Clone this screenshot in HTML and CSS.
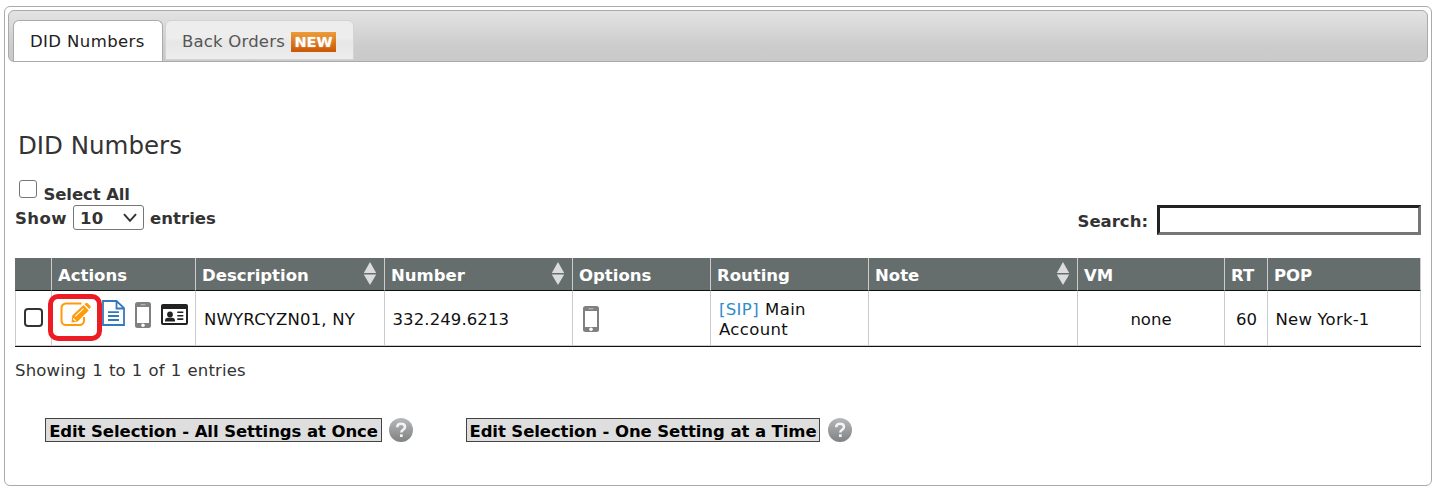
FILE: index.html
```html
<!DOCTYPE html>
<html lang="en">
<head>
<meta charset="utf-8">
<title>DID Numbers</title>
<link rel="stylesheet" href="styles.css">
</head>
<body>
<svg class="defs" width="0" height="0" aria-hidden="true">
  <defs>
    <linearGradient id="help-fill" x1="0" y1="0" x2="0" y2="1"><stop offset="0" stop-color="#b7b8ba"/><stop offset="1" stop-color="#7f8183"/></linearGradient>
    <symbol id="phone" viewBox="0 0 16 26"><rect width="16" height="26" rx="2.5" fill="#808080"/><rect x="2" y="5" width="12" height="16" fill="#fff"/><rect x="5.5" y="2.3" width="5" height="1" rx=".5" fill="#c4c4c4"/><circle cx="8" cy="23.3" r="1.8" fill="#fff"/></symbol>
    <symbol id="sort" viewBox="0 0 14 24"><path d="M7 0 13.2 11H.8Z" fill="#dcdcdc"/><path d="M7 23 13.2 12.4H.8Z" fill="#dcdcdc"/></symbol>
    <symbol id="help" viewBox="0 0 24 24"><circle cx="12" cy="12" r="12" fill="url(#help-fill)"/><path d="M8.2 9.3C8.2 6.800 9.700 5.800 12 5.800s4 1.200 4 3.200c0 2.700-3.700 2.700-3.700 5.500" fill="none" stroke="#f4f4f4" stroke-width="2.500"/><rect x="11" y="16.300" width="2.700" height="2.700" fill="#f4f4f4"/></symbol>
  </defs>
</svg>
<main class="panel">
  <nav class="tabs">
    <a class="tab tab-active"><span class="tab-text">DID Numbers</span></a>
    <a class="tab"><span class="tab-text-muted">Back Orders</span><span class="badge">NEW</span></a>
  </nav>
  <section class="content">
    <h1 class="title">DID Numbers</h1>
    <label class="select-all"><input class="check" type="checkbox"><span class="select-label">Select All</span></label>
    <div class="toolbar">
      <label class="length"><span class="show">Show</span>
        <span class="picker"><span>10</span><svg width="14" height="10" viewBox="0 0 14 10"><path d="M1 1.200 7 7.800l6-6.600" fill="none" stroke="#333" stroke-width="2"/></svg></span>
        <span class="entries">entries</span></label>
      <label class="search"><span class="search-label">Search:</span><input class="search-input" type="text"></label>
    </div>
    <table class="grid">
      <colgroup><col class="c-check"><col class="c-actions"><col class="c-desc"><col class="c-number"><col class="c-options"><col class="c-routing"><col class="c-note"><col class="c-vm"><col class="c-rt"><col class="c-pop"></colgroup>
      <thead><tr>
        <th></th>
        <th><div class="head">Actions</div></th>
        <th><div class="head"><span>Description</span><svg class="sort"><use href="#sort"/></svg></div></th>
        <th><div class="head"><span>Number</span><svg class="sort"><use href="#sort"/></svg></div></th>
        <th><div class="head">Options</div></th>
        <th><div class="head">Routing</div></th>
        <th><div class="head">Note<svg class="sort"><use href="#sort"/></svg></div></th>
        <th><div class="head">VM</div></th>
        <th><div class="head">RT</div></th>
        <th><div class="head">POP</div></th>
      </tr></thead>
      <tbody><tr>
        <td class="pick"><input class="check check-row" type="checkbox"></td>
        <td class="actions"><div class="icons">
          <svg class="i-edit" width="32" height="25" viewBox="0 0 32 25"><path d="M21.500 1.500H6a4.500 4.500 0 0 0-4.500 4.500v12.500A4.500 4.500 0 0 0 6 23h13.500a4.500 4.500 0 0 0 4.500-4.500V15" fill="none" stroke="#ff9a0a" stroke-width="2"/><path d="m11.500 20.500.8-7L23.500 3l5.200 5.400L17.600 19.500Zm13-18.300 1-.9q1.200-1 2.400.1l2.300 2.300q1.200 1.200.1 2.400l-1 1Z" fill="#ff9a0a"/><path d="m15.200 14.300 8.300-7.700M13.200 16.500l2.400 2.300" stroke="#fff" stroke-width="1.100"/></svg>
          <svg class="i-doc" width="23" height="26" viewBox="0 0 23 26"><path d="M1 1h13.500L22 8.200V25H1ZM14.500 1v7.500H22M6 12.200h11M6 16h11M6 20h11" fill="none" stroke="#3379bd" stroke-width="1.800"/></svg>
          <svg class="i-phone" width="16" height="26"><use href="#phone"/></svg>
          <svg class="i-card" width="27" height="21" viewBox="0 0 27 21"><rect width="27" height="21" rx="2" fill="#222"/><path d="M2 5h23v14H2Z" fill="#fff"/><circle cx="9" cy="10.500" r="2.900" fill="#222"/><path d="M4 17.500v-.7q0-3 3-3h4q3 0 3 3v.7ZM16.300 7.500h6v1.600h-6Zm0 3.400h6v1.600h-6Zm0 3.400h6v1.600h-6Z" fill="#222"/></svg>
          <span class="highlight"></span>
        </div></td>
        <td><span class="t-desc">NWYRCYZN01, NY</span></td>
        <td><span class="t-number">332.249.6213</span></td>
        <td class="opt"><svg class="opt-phone" width="16" height="26"><use href="#phone"/></svg></td>
        <td class="routing"><a class="sip">[SIP]</a> Main<br>Account</td>
        <td></td>
        <td class="center">none</td>
        <td class="rt">60</td>
        <td><span class="t-pop">New York-1</span></td>
      </tr></tbody>
    </table>
    <p class="info">Showing 1 to 1 of 1 entries</p>
    <div class="buttons">
      <button class="edit edit-all">Edit Selection - All Settings at Once</button><svg class="help"><use href="#help"/></svg>
      <button class="edit edit-one">Edit Selection - One Setting at a Time</button><svg class="help"><use href="#help"/></svg>
    </div>
  </section>
</main>
</body>
</html>
```
FILE: styles.css
```css
* { box-sizing: border-box; }
body { margin: 0; padding: 6px 3px 0 4px; background: #fff; color: #333; font: 16.5px/20px Verdana, "DejaVu Sans", sans-serif; }
.defs { position: absolute; }
.panel { height: 480px; border: 1px solid #aaa; border-radius: 6px; padding: 3px; }
.tabs { display: flex; align-items: flex-start; gap: 2px; height: 52px; padding: 9px 0 0 4px; border: 1px solid #aaa; border-radius: 6px; background: linear-gradient(#e3e3e3, #ccc 70%, #cacaca); }
.tab { display: flex; align-items: center; height: 40px; width: 189px; padding: 4px 0 0 16px; gap: 6px; border: 1px solid #d3d3d3; border-radius: 6px 6px 0 0; background: linear-gradient(#ededed 45%, #e6e6e6 55%, #ededed); color: #555; white-space: nowrap; }
.tab-active { height: 41px; width: 150px; padding-top: 2px; border-color: #aaa; border-bottom: 0; background: #fff; color: #212121; }
.tab-text { letter-spacing: .4px; }
.tab-text-muted { width: 103px; letter-spacing: .2px; margin-top: -1px; }
.badge { width: 45px; height: 20px; background: linear-gradient(#ee9b38, #c95704); color: #fff; font: bold 14.500px/21px "DejaVu Sans", sans-serif; text-align: center; text-shadow: 0 0 2px #fff8; }
.content { padding: 0 7px 0 7px; }
.title { margin: 68px 0 0 3px; font-size: 24.500px; line-height: 32px; font-weight: 400; }
.select-all { display: flex; align-items: flex-start; margin: 18px 0 0 3px; height: 25px; font-weight: 700; }
.check { appearance: none; flex: none; width: 18px; height: 18px; margin: 0 0 0 .5px; border: 1px solid #767676; border-radius: 3px; background: #fff; }
.select-label { margin: 5px 0 0 7px; letter-spacing: -.1px; }
.toolbar { display: flex; justify-content: space-between; height: 53px; font-weight: 700; }
.length { display: flex; height: 25px; align-items: center; }
.show { width: 52px; letter-spacing: .45px; }
.show, .entries { padding-top: 2px; }
.entries { letter-spacing: .05px; }
.picker { display: flex; align-items: center; justify-content: space-between; width: 71px; height: 25px; margin: 0 6px; padding: 2px 6px 0 6px; border: 1px solid #767676; border-radius: 3px; letter-spacing: .3px; }
.picker svg { margin-top: -2px; }
.search { display: flex; align-items: center; gap: 9px; height: 30px; }
.search-label { padding-top: 3px; }
.search-input { width: 264px; height: 30px; border: 3px solid; border-color: #222 #767676 #767676 #222; background: #fff; }
.grid { width: 1406px; table-layout: fixed; border-collapse: separate; border-spacing: 0; color: #111; border-bottom: 1px solid #111; }
.c-check { width: 36px; } .c-actions { width: 144px; } .c-desc { width: 189px; } .c-number { width: 188px; } .c-options { width: 138px; } .c-routing { width: 158px; } .c-note { width: 209px; } .c-vm { width: 147px; } .c-rt { width: 43px; } .c-pop { width: 154px; }
th { height: 33px; padding: 4px 8px 0 6px; background: #666e6d; border-left: 1px solid #ccc; border-bottom: 1px solid #111; color: #fff; text-align: left; }
th:first-child { border-left-color: #666e6d; }
th:last-child, td:last-child { border-right: 1px solid #ccc; }
.head { display: flex; align-items: center; justify-content: space-between; line-height: 24px; }
.sort { width: 14px; height: 24px; flex: none; margin: -2px -1px 2px 0; }
td { height: 55px; padding: 3px 0 0 8px; border-left: 1px solid #ccc; border-bottom: 1px solid #ccc; white-space: nowrap; }
.pick { padding: 0 0 2px 7px; }
.check-row { display: block; width: 19px; height: 19px; border: 2px solid #333; border-radius: 4px; }
.actions { padding: 0; }
.icons { position: relative; display: flex; align-items: flex-start; height: 54px; }
.i-edit { margin: 11px 0 0 8px; }
.i-doc { margin: 9px 0 0 10px; }
.i-phone { margin: 11px 0 0 10px; }
.i-card { margin: 13px 0 0 10px; }
.highlight { position: absolute; left: -4px; top: 3px; width: 54px; height: 47px; border: 5px solid #ed1c24; border-radius: 10px; }
.t-desc { letter-spacing: .2px; }
.t-number { letter-spacing: .1px; margin-left: -.5px; }
.t-pop { letter-spacing: .2px; margin-left: -.5px; }
.opt { padding-top: 2px; }
.opt-phone { display: block; margin-left: 2px; }
.routing { padding-top: 4px; word-spacing: .6px; letter-spacing: .35px; }
.sip { color: #2e8dcc; }
.center { text-align: center; padding-left: 0; }
.rt { padding-left: 11px; }
.info { margin: 14px 0 0; letter-spacing: .17px; word-spacing: .6px; }
.buttons { display: flex; align-items: center; margin: 37px 0 0 30px; }
.edit { height: 24px; padding: 3px 0 0; border: 1px solid #444; background: #dedede; color: #000; font: bold 16.500px/20px Verdana, "DejaVu Sans", sans-serif; letter-spacing: -.09px; white-space: nowrap; }
.edit-all { width: 337px; }
.edit-one { width: 354px; margin-left: 53px; }
.help { width: 24px; height: 24px; margin-left: 7px; }
.edit-one + .help { margin-left: 8px; }
```
